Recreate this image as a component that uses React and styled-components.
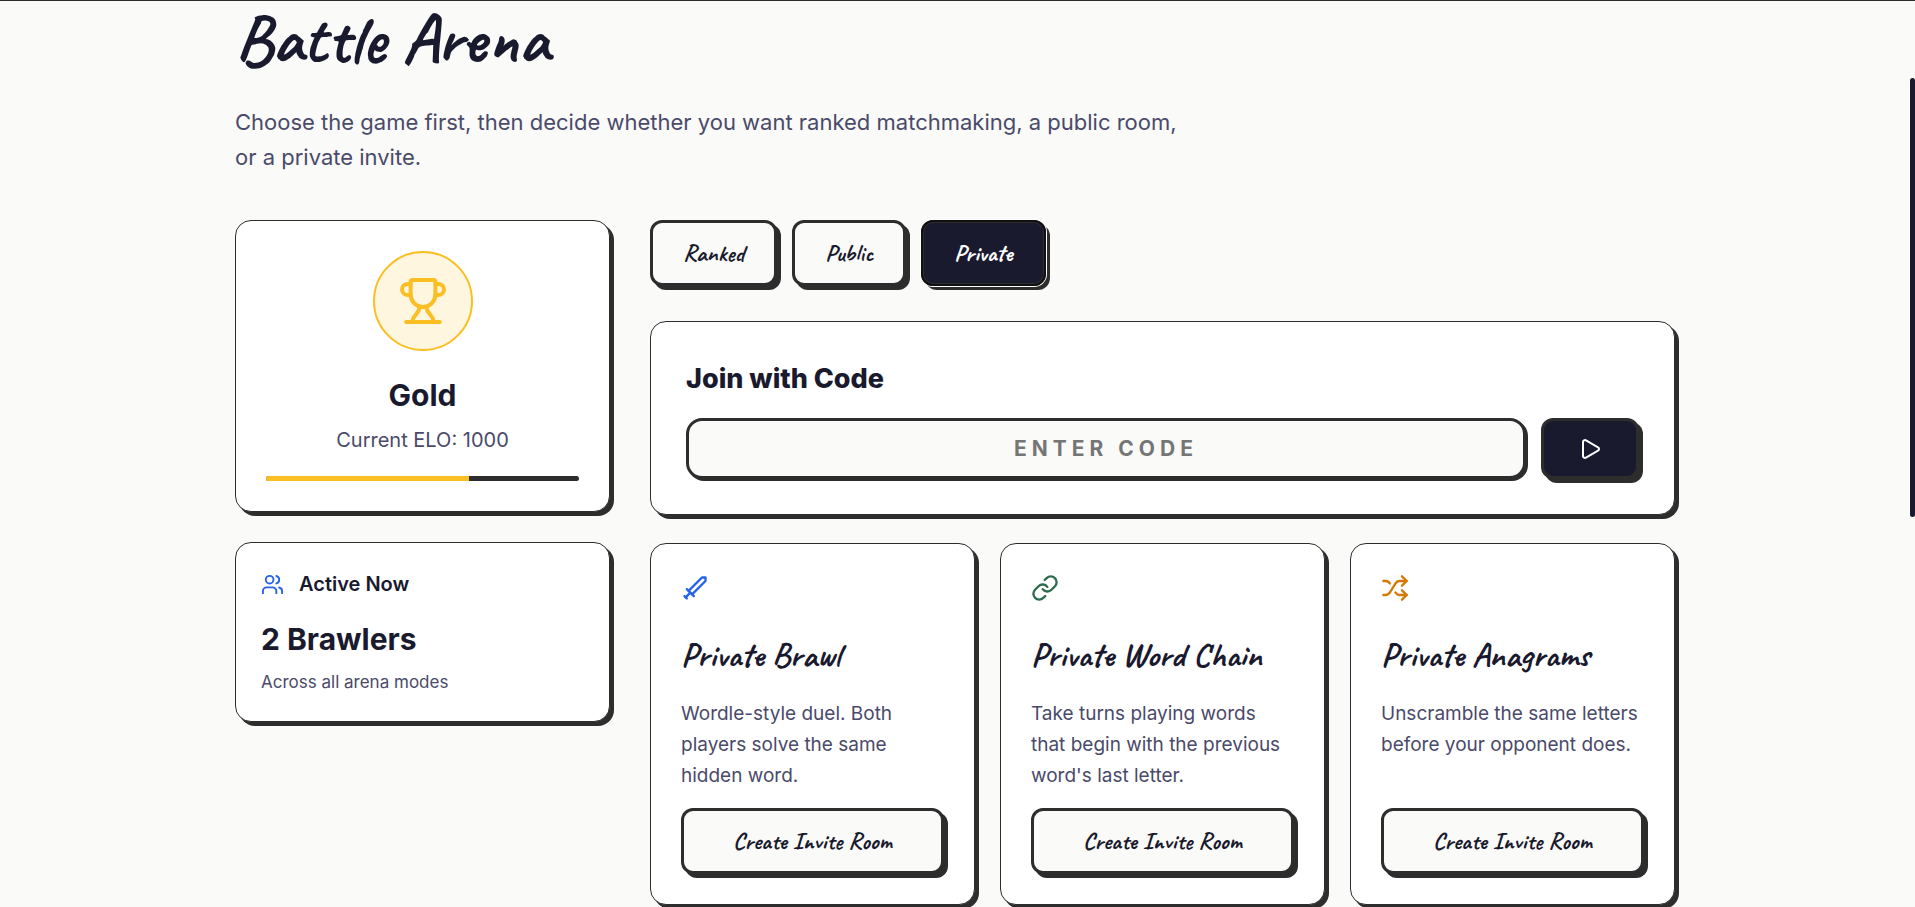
import React from 'react';
import styled, { createGlobalStyle } from 'styled-components';
import {
  Link, Play, Shuffle, Sword, Users,
} from 'lucide-react';

const colors = {
  paper: '#fafaf8',
  card: '#ffffff',
  ink: '#1a1a2e',
  muted: '#4a4a6a',
  line: '#2d2d2d',
  gold: '#fbbf24',
  blue: '#2563eb',
  green: '#2d6a4f',
  orange: '#d97706',
};

const tabs = ['Ranked', 'Public', 'Private'];

const modes = [
  {
    name: 'Private Brawl',
    text: 'Wordle-style duel. Both players solve the same hidden word.',
    icon: Sword,
    color: colors.blue,
  },
  {
    name: 'Private Word Chain',
    text: "Take turns playing words that begin with the previous word's last letter.",
    icon: Link,
    color: colors.green,
  },
  {
    name: 'Private Anagrams',
    text: 'Unscramble the same letters before your opponent does.',
    icon: Shuffle,
    color: colors.orange,
  },
];

const TrophyIcon = () => (
  <svg
    width="48"
    height="48"
    viewBox="0 0 24 24"
    fill="none"
    stroke="currentColor"
    strokeWidth="2"
    strokeLinecap="round"
    strokeLinejoin="round"
    aria-hidden="true"
  >
    <path d="M6.8 1.5h10.4a1 1 0 0 1 1 1V8.8a6.2 6.2 0 0 1-12.4 0V2.5a1 1 0 0 1 1-1Z" />
    <path d="M5.8 3.5H4.5C2.7 3.5 1.5 4.7 1.5 6.2S2.7 9 4.5 9h1.3" />
    <path d="M18.2 3.5h1.3c1.8 0 3 1.2 3 2.7S21.300 9 19.5 9h-1.3" />
    <path d="M10.3 15.2c-.3 3.4-3.3 3.6-3.7 7.2M13.7 15.2c.3 3.4 3.3 3.6 3.7 7.2M3.6 22.5h16.8" />
  </svg>
);

const App = () => {
  const [selectedTab, setSelectedTab] = React.useState('Private');

  return (
    <>
      <GlobalStyle />
      <Page>
        <Title>Battle Arena</Title>
        <Intro>
          Choose the game first, then decide whether you want ranked matchmaking,
          a public room, or a private invite.
        </Intro>
        <Columns>
          <Sidebar>
            <RankCard>
              <RankBadge><TrophyIcon /></RankBadge>
              <StatValue>Gold</StatValue>
              <Elo>Current ELO: 1000</Elo>
              <Track role="progressbar" aria-label="Rank progress" aria-valuenow={65} aria-valuemin={0} aria-valuemax={100}>
                <TrackFill style={{ width: '65%' }} />
              </Track>
            </RankCard>
            <ActiveCard>
              <ActiveHeading>
                <Users size={23} color={colors.blue} />
                Active Now
              </ActiveHeading>
              <Brawlers>2 Brawlers</Brawlers>
              <SmallNote>Across all arena modes</SmallNote>
            </ActiveCard>
          </Sidebar>
          <Main>
            <TabRow>
              {tabs.map((tab) => (
                <SketchButton
                  type="button"
                  key={tab}
                  $selected={tab === selectedTab}
                  aria-pressed={tab === selectedTab}
                  onClick={() => setSelectedTab(tab)}
                >
                  {tab}
                </SketchButton>
              ))}
            </TabRow>
            <JoinCard onSubmit={(e) => e.preventDefault()}>
              <JoinLabel htmlFor="room-code">Join with Code</JoinLabel>
              <JoinRow>
                <CodeInput id="room-code" type="text" placeholder="ENTER CODE" autoComplete="off" />
                <JoinButton type="submit" aria-label="Join room">
                  <Play size={24} />
                </JoinButton>
              </JoinRow>
            </JoinCard>
            <ModeGrid>
              {modes.map(({
                name, text, icon: Icon, color,
              }) => (
                <ModeCard key={name}>
                  <Icon size={28} color={color} />
                  <ModeTitle>{name}</ModeTitle>
                  <ModeText>{text}</ModeText>
                  <SketchButton type="button">Create Invite Room</SketchButton>
                </ModeCard>
              ))}
            </ModeGrid>
          </Main>
        </Columns>
      </Page>
      <ScrollThumb />
    </>
  );
};

const GlobalStyle = createGlobalStyle`
  * {
    box-sizing: border-box;
  }
  body {
    margin: 0;
    background: ${colors.paper};
    border-top: 1px solid ${colors.line};
    color: ${colors.ink};
    font-family: Inter, 'Liberation Sans', sans-serif;
  }
  html {
    overflow: hidden;
  }
  h1, h2, h3, p {
    margin: 0;
  }
`;

const Page = styled.main`
  width: calc(100% - 5px);
  padding: 0 235px 40px;
`;

const Title = styled.h1`
  font-family: Caveat, cursive;
  font-size: 70px;
  font-weight: 700;
  line-height: 76px;
  margin-bottom: 28px;
`;

const Intro = styled.p`
  max-width: 960px;
  margin-bottom: 45px;
  color: ${colors.muted};
  font-size: 22px;
  line-height: 35px;
`;

const Columns = styled.div`
  display: grid;
  grid-template-columns: 375px 1fr;
  align-items: start;
  gap: 40px;
`;

const Sidebar = styled.aside`
  display: flex;
  flex-direction: column;
  gap: 30px;
`;

const Main = styled.div`
  min-width: 0;
`;

const Card = styled.section`
  background: ${colors.card};
  border: 1px solid ${colors.line};
  border-radius: 16px;
  box-shadow: 4px 4px 0 ${colors.line};
`;

const RankCard = styled(Card)`
  display: flex;
  flex-direction: column;
  align-items: center;
  padding: 30px;
`;

const RankBadge = styled.div`
  display: flex;
  align-items: center;
  justify-content: center;
  width: 100px;
  height: 100px;
  margin-bottom: 20px;
  background: #fff6e0;
  border: 2px solid ${colors.gold};
  border-radius: 50%;
  color: ${colors.gold};
`;

const StatValue = styled.h2`
  font-size: 30px;
  font-weight: 700;
  line-height: 48px;
`;

const Elo = styled.p`
  margin: 5px 0 20px;
  color: ${colors.muted};
  font-size: 20px;
  line-height: 32px;
`;

const Track = styled.div`
  align-self: stretch;
  height: 5px;
  overflow: hidden;
  background: ${colors.line};
  border-radius: 3px;
`;

const TrackFill = styled.div`
  height: 100%;
  background: ${colors.gold};
`;

const ActiveCard = styled(Card)`
  padding: 25px;
`;

const ActiveHeading = styled.h3`
  display: flex;
  align-items: center;
  gap: 15px;
  font-size: 20px;
  font-weight: 600;
  line-height: 32px;
`;

const Brawlers = styled(StatValue)`
  margin: 15px 0 5px;
`;

const SmallNote = styled.p`
  color: ${colors.muted};
  font-size: 17px;
  line-height: 28px;
`;

const TabRow = styled.div`
  display: flex;
  gap: 15px;
  margin-bottom: 35px;
`;

const SketchButton = styled.button`
  height: 66px;
  padding: 0 30px;
  cursor: pointer;
  background: ${(props) => (props.$selected ? colors.ink : colors.paper)};
  border: 3px solid ${colors.line};
  border-radius: 12px;
  box-shadow: ${(props) => (props.$selected ? '0 0 0 1px #ffffff, ' : '')}4px 4px 0 ${colors.line};
  outline: ${(props) => (props.$selected ? '2px solid #101010' : 'none')};
  outline-offset: -2px;
  color: ${(props) => (props.$selected ? '#ffffff' : colors.ink)};
  font-family: Caveat, cursive;
  font-size: 24px;
  font-weight: ${(props) => (props.$selected ? 700 : 600)};
`;

const JoinCard = styled(Card).attrs({ as: 'form' })`
  margin-bottom: 28px;
  padding: 35px;
`;

const JoinLabel = styled.label`
  display: block;
  margin-bottom: 18px;
  font-size: 27px;
  font-weight: 800;
  line-height: 43px;
`;

const JoinRow = styled.div`
  display: flex;
  gap: 15px;
`;

const CodeInput = styled.input`
  flex: 1;
  min-width: 0;
  height: 61px;
  padding: 0 20px;
  background: ${colors.paper};
  border: 3px solid ${colors.line};
  border-radius: 16px;
  box-shadow: 2px 2px 0 ${colors.line};
  color: ${colors.ink};
  font-family: inherit;
  font-size: 21px;
  font-weight: 700;
  letter-spacing: 5px;
  text-align: center;

  &::placeholder {
    color: #757575;
  }
`;

const JoinButton = styled.button`
  display: flex;
  align-items: center;
  justify-content: center;
  width: 98px;
  padding: 0;
  cursor: pointer;
  background: ${colors.ink};
  border: 3px solid ${colors.line};
  border-radius: 12px;
  box-shadow: 4px 4px 0 ${colors.line};
  color: #ffffff;
`;

const ModeGrid = styled.div`
  display: grid;
  grid-template-columns: repeat(3, 1fr);
  gap: 25px;
`;

const ModeCard = styled(Card)`
  display: flex;
  flex-direction: column;
  padding: 30px;

  button {
    margin-top: auto;
  }
`;

const ModeTitle = styled.h3`
  margin: 25px 0 15px;
  font-family: Caveat, cursive;
  font-size: 34px;
  font-weight: 700;
  line-height: 56px;
`;

const ModeText = styled.p`
  margin-bottom: 17px;
  color: ${colors.muted};
  font-size: 19px;
  line-height: 31px;
`;

/* page scroll indicator on the right edge of the window */
const ScrollThumb = styled.div`
  position: fixed;
  top: 78px;
  right: 0;
  width: 5px;
  height: 439px;
  background: ${colors.ink};
  border-radius: 3px;
`;

export default App;
